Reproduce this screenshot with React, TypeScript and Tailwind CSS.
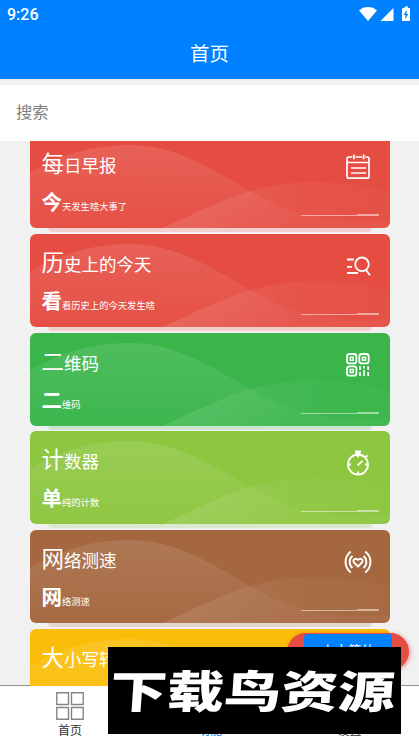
import type { ReactNode } from "react";

type CardItem = {
  title: string;
  desc?: string;
  bg: string;
  shade: string;
  icon?: ReactNode;
};

const iconProps = {
  viewBox: "0 0 28 28",
  fill: "none",
  stroke: "currentColor",
  className: "h-7 w-7",
};

function CalendarIcon() {
  return (
    <svg {...iconProps} strokeWidth="1.7">
      <path d="M8.2 4H5a2 2 0 0 0-2 2v17.200a2 2 0 0 0 2 2h18a2 2 0 0 0 2-2V6a2 2 0 0 0-2-2h-1.700M11.500 4H18" />
      <path d="M3 9.500h22M7 15h15M7 20h15" />
      <path d="M9.900 1.500v4.800M19.600 1.500v4.800" strokeWidth="1.800" />
    </svg>
  );
}

function SearchListIcon() {
  return (
    <svg {...iconProps} strokeWidth="1.8">
      <circle cx="18" cy="12.3" r="6.8" />
      <path d="M22 18l4 5.2M3 7.5h7M3 14.8h5M3 21h11" />
    </svg>
  );
}

function QrIcon() {
  return (
    <svg {...iconProps} strokeWidth="1.8">
      <rect x="3" y="3" width="9.4" height="9.4" rx="2.5" />
      <rect x="15.3" y="3" width="9.4" height="9.4" rx="2.5" />
      <rect x="3" y="15.3" width="9.4" height="9.4" rx="2.5" />
      <path d="M6.2 6.2h3v3h-3zM18.5 6.2h3v3h-3zM6.2 18.5h3v3h-3z" strokeWidth="1.5" />
      <path d="M16 15v4M16 21v4M20 15v2.500M20 19v6M24.200 15v4M24.200 21v4" strokeWidth="1.7" />
    </svg>
  );
}

function StopwatchIcon() {
  return (
    <svg {...iconProps} strokeWidth="1.8">
      <circle cx="14" cy="15.500" r="10" />
      <path d="M11 2.500h6M11.500 4.500h5M21 8l2.500-1.500M14 5.500v3M14 22.500v3M4 15.500h3M21 15.500h3M13.500 16.300l5-4.500" />
    </svg>
  );
}

function SignalHeartIcon() {
  return (
    <svg {...iconProps} strokeWidth="1.9">
      <path d="M6.800 3.500C-.2 9-.2 19 6.800 24.500M21.200 3.500C28.200 9 28.200 19 21.200 24.500M8.500 8C4.700 11 4.700 17 8.500 20M19.500 8C23.300 11 23.300 17 19.500 20" />
      <path d="M14 18.500l-4-4c-2-2.600 1.500-5.500 4-2.500 2.500-3 6-.1 4 2.500z" strokeLinejoin="round" />
    </svg>
  );
}

const cards: CardItem[] = [
  { title: "每日早报", desc: "今天发生啥大事了", bg: "bg-[#e54d42]", shade: "bg-[#f3cfce]", icon: <CalendarIcon /> },
  { title: "历史上的今天", desc: "看看历史上的今天发生啥", bg: "bg-[#e54d42]", shade: "bg-[#f0cfcd]", icon: <SearchListIcon /> },
  { title: "二维码", desc: "二维码", bg: "bg-[#39b54a]", shade: "bg-[#cde5d0]", icon: <QrIcon /> },
  { title: "计数器", desc: "单纯的计数", bg: "bg-[#8dc63f]", shade: "bg-[#dde7cf]", icon: <StopwatchIcon /> },
  { title: "网络测速", desc: "网络测速", bg: "bg-[#a5673f]", shade: "bg-[#e2d6cf]", icon: <SignalHeartIcon /> },
  { title: "大小写转换", bg: "bg-[#fbbd08]", shade: "bg-[#f2e6c4]" },
];

function Waves({ id }: { id: string }) {
  return (
    <svg viewBox="0 0 361 93" preserveAspectRatio="none" className="absolute inset-0 h-full w-full">
      <defs>
        <linearGradient id={id + "a"} x1="0.3" y1="0" x2="0.24" y2="1">
          <stop offset="0" stopColor="#fff" stopOpacity="0.11" />
          <stop offset="1" stopColor="#fff" stopOpacity="0.02" />
        </linearGradient>
        <linearGradient id={id + "b"} x1="0" y1="0" x2="1" y2="0">
          <stop offset="0" stopColor="#fff" stopOpacity="0.12" />
          <stop offset="0.6" stopColor="#fff" stopOpacity="0.04" />
          <stop offset="1" stopColor="#fff" stopOpacity="0.02" />
        </linearGradient>
      </defs>
      <path
        d="M0 38C30 19 65 10 100 10C143 10 177 30 222 57C262 80 300 90 361 85V93H0z"
        fill={`url(#${id}a)`}
      />
      <path d="M133 93C180 73 220 47 285 47C315 47 338 51 361 57V93z" fill={`url(#${id}b)`} />
    </svg>
  );
}

function Card({ item, id }: { item: CardItem; id: string }) {
  return (
    <li className="relative mb-[5.75px] h-[93px] shrink-0">
      <div className={`absolute inset-x-[18px] -bottom-1 h-5 rounded-b ${item.shade}`} />
      <div
        className={`relative flex h-full justify-between overflow-hidden rounded-md pl-3 text-white ${item.bg}`}
      >
        <Waves id={id} />
        <div className="relative pt-[11px]">
          <h2 className="h-10 text-[17.5px] leading-[36px] whitespace-nowrap first-letter:text-[22.500px]">
            {item.title}
          </h2>
          {item.desc && (
            <p className="text-[9.3px] leading-[34px] whitespace-nowrap first-letter:text-[20.500px] first-letter:font-bold">
              {item.desc}
            </p>
          )}
        </div>
        <div className="relative flex w-[89px] flex-col items-end justify-between pt-[18px] pr-[11px] pb-[12px]">
          <div className="mr-[7px] h-7 w-7">{item.icon}</div>
          <div className="flex items-end">
            <span className="h-px w-14 shrink-0 bg-white/50" />
            <span className="h-0.5 w-[22px] shrink-0 bg-white/50" />
          </div>
        </div>
      </div>
    </li>
  );
}

function StatusBar() {
  return (
    <div className="flex h-7 items-center justify-between px-[7px]">
      <span className="mt-0.5 font-['Roboto'] text-[16px] font-medium">9:26</span>
      <svg viewBox="0 0 54 16" fill="currentColor" className="h-4 w-[54px]">
        <path d="M1 4.500C6-.1 14-.1 19 4.500L10 15z" />
        <path d="M35.500 2v13H22.500z" />
        <path d="M45 2h1.500V.5h3.500V2h2v13h-8V3z" />
        <path d="M49 4l-3.500 5h2l-.5 4 3.500-5h-2z" fill="#0081ff" />
      </svg>
    </div>
  );
}

export default function App() {
  return (
    <div className="relative flex h-[744px] w-[419px] flex-col overflow-hidden bg-[#f1f1f1] font-['Roboto','Noto_Sans_CJK_SC',sans-serif]">
      <header className="h-[79px] shrink-0 bg-[#0081ff] text-white">
        <StatusBar />
        <h1 className="pt-px text-center text-[19.5px] leading-[52px]">首页</h1>
      </header>

      <div className="mt-[6px] flex h-14 shrink-0 items-center bg-white px-4">
        <input
          placeholder="搜索"
          className="w-full text-[16.3px] outline-none placeholder:text-[#808080]"
        />
      </div>

      <main className="h-[545px] shrink-0 overflow-hidden px-[29.5px]">
        <ul className="-mt-[6px] flex flex-col">
          {cards.map((item, i) => (
            <Card key={item.title} item={item} id={`wave${i}`} />
          ))}
        </ul>
      </main>

      <nav className="-mt-px flex flex-1 border-t border-[#8f8f8f] bg-white text-[12px] text-[#333]">
        <div className="flex w-[140px] flex-col items-center pt-[6px]">
          <svg viewBox="0 0 28 28" fill="none" stroke="#858585" strokeWidth="1.4" className="h-7 w-7">
            <path d="M.8.8h11.700v11.700H.8zM15.500.8h11.700v11.700H15.500zM.8 15.500h11.700v11.700H.8zM15.500 15.500h11.700v11.700H15.500z" />
          </svg>
          <span className="mt-0.5 leading-[18px]">首页</span>
        </div>
        <div className="flex w-[140px] flex-col items-center pt-[36px] leading-[18px] text-[#0081ff]">
          功能
        </div>
        <div className="flex flex-1 flex-col items-center pt-[36px] leading-[18px]">设置</div>
      </nav>

      <div className="absolute top-[633px] left-[287px] flex h-[37px] w-[122px] justify-center rounded-full bg-[#e54d42] shadow-[1px_1px_4px_#e54d4299]">
        <div className="mt-px h-9 w-[88px] rounded bg-[#0081ff] text-center text-[13.500px] leading-[34px] text-white">
          中文简体
        </div>
      </div>

      <div className="absolute top-[647px] left-[108px] flex h-[87px] w-[293px] items-center justify-center bg-black pt-[3px] pr-[4px]">
        <span className="-skew-x-3 scale-y-[0.78] text-[57px] leading-none font-black whitespace-nowrap text-white">
          下载鸟资源
        </span>
      </div>
    </div>
  );
}
